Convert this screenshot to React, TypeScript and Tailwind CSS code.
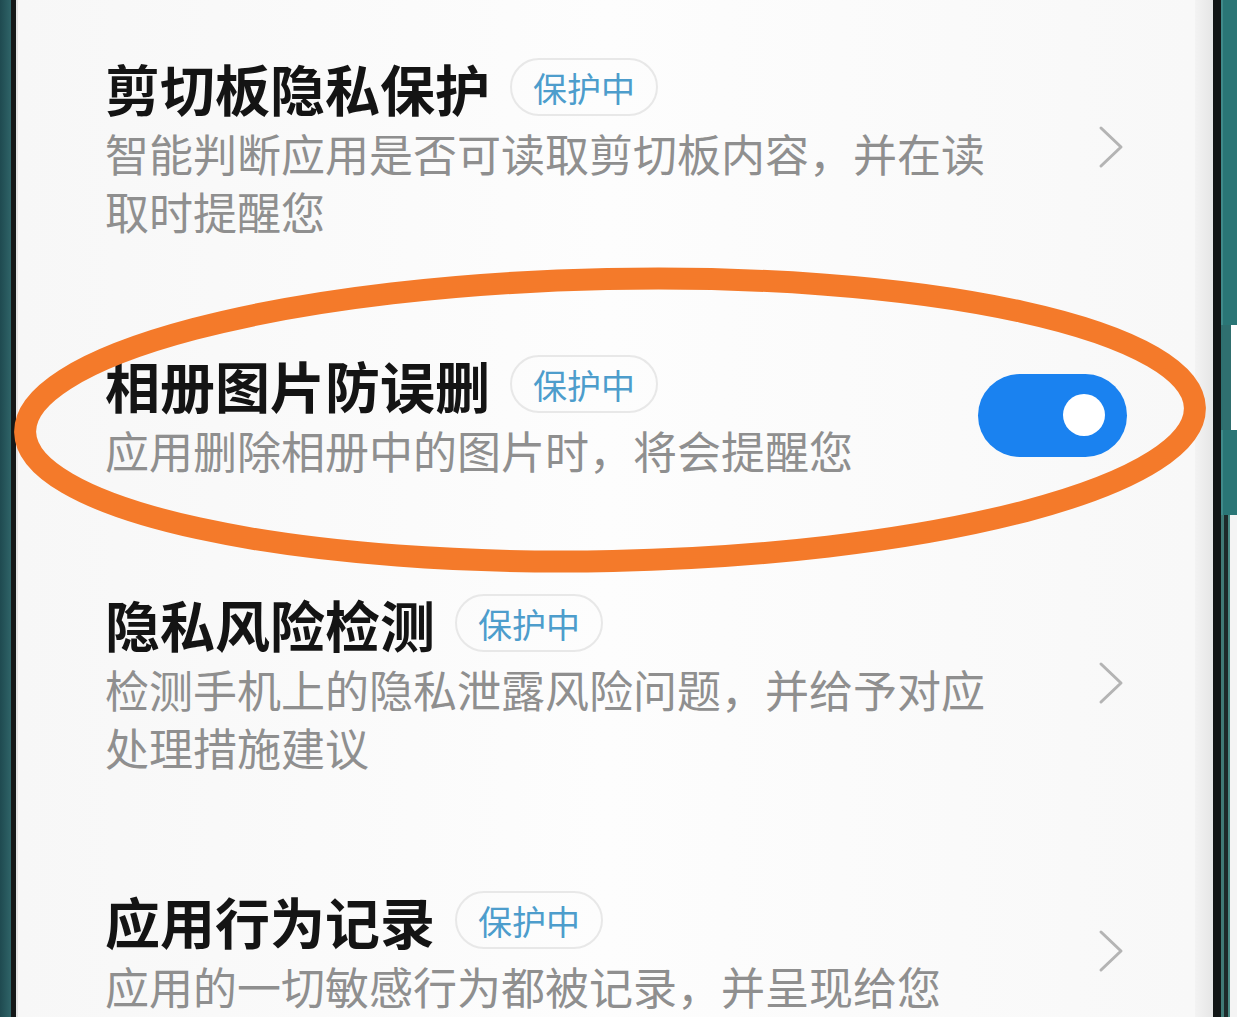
import React from 'react';

type Item = {
  title: string;
  desc: string;
  toggle?: boolean;
};

const items: Item[] = [
  { title: '剪切板隐私保护', desc: '智能判断应用是否可读取剪切板内容，并在读取时提醒您' },
  { title: '相册图片防误删', desc: '应用删除相册中的图片时，将会提醒您', toggle: true },
  { title: '隐私风险检测', desc: '检测手机上的隐私泄露风险问题，并给予对应处理措施建议' },
  { title: '应用行为记录', desc: '应用的一切敏感行为都被记录，并呈现给您' },
];

function Chevron() {
  return (
    <svg width="28" height="46" viewBox="0 0 28 46" fill="none">
      <polyline points="4,4 24,23 4,42" stroke="#b4b4b4" strokeWidth="3" strokeLinecap="round" strokeLinejoin="round" />
    </svg>
  );
}

function Toggle() {
  return (
    <div className="w-[149px] h-[83px] rounded-full bg-[#1a82f0] flex items-center justify-end pr-[22px]">
      <div className="w-[42px] h-[42px] rounded-full bg-white" />
    </div>
  );
}

function Row({ item }: { item: Item }) {
  return (
    <div className="flex items-center pt-[54px] pb-[57px]">
      <div className="flex-1">
        <div className="flex items-center gap-[20px] h-[66px]">
          <span className="text-[55px] leading-[66px] font-bold text-[#141414]">{item.title}</span>
          <span className="h-[58px] px-[21px] rounded-full border-2 border-[#e8e8e8] flex items-center text-[34px] text-[#4d9dcc]">
            保护中
          </span>
        </div>
        <p className="mt-[4px] max-w-[900px] text-[44px] leading-[58px] text-[#8f8f8f]">{item.desc}</p>
      </div>
      {item.toggle ? <Toggle /> : <div className="pr-[2px]"><Chevron /></div>}
    </div>
  );
}

export default function App() {
  return (
    <div
      className="relative w-[1237px] h-[1017px] overflow-hidden flex bg-white"
      style={{ fontFamily: '"Noto Sans CJK SC", "Noto Sans", sans-serif' }}
    >
      {/* left bezel */}
      <div className="w-[11px] bg-gradient-to-r from-[#1f4a50] to-[#2f6468]" />
      <div className="w-[5px] bg-[#141818]" />
      <div className="w-[2px] bg-[#e4e4e4]" />

      {/* screen */}
      <div className="flex-1 bg-gradient-to-r from-[#f7f7f7] via-[#fdfdfd] to-[#f8f8f8] pl-[87px] pr-[68px]">
        {items.map((it) => (
          <Row key={it.title} item={it} />
        ))}
      </div>

      {/* right bezel */}
      <div className="w-[18px] bg-gradient-to-r from-[#f3f3f3] to-[#e6e6e6]" />
      <div className="w-[8px] bg-[#121616]" />
      <div className="w-[16px] flex flex-col">
        <div className="h-[325px] flex">
          <div className="w-[2px] bg-[#3f8a8a]" />
          <div className="flex-1 bg-[#2a7676]" />
        </div>
        <div className="h-[105px] flex">
          <div className="w-[10px] bg-[#2f6f6f]" />
          <div className="flex-1 bg-white" />
        </div>
        <div className="h-[85px] flex">
          <div className="w-[2px] bg-[#3f8a8a]" />
          <div className="flex-1 bg-[#2a7676]" />
        </div>
        <div className="flex-1 flex">
          <div className="w-[3px] bg-[#3f7a76]" />
          <div className="w-[4px] bg-[#1d2a2a]" />
          <div className="w-[2px] bg-[#4a8a84]" />
          <div className="flex-1 bg-[#f4f4f4]" />
        </div>
      </div>

      {/* orange annotation */}
      <svg className="absolute left-0 top-0 pointer-events-none" width="1237" height="1017" viewBox="0 0 1237 1017">
        <ellipse
          cx="610"
          cy="420"
          rx="585"
          ry="141"
          fill="none"
          stroke="#f47a2a"
          strokeWidth="22"
          transform="rotate(-1.2 610 420)"
        />
      </svg>
    </div>
  );
}
